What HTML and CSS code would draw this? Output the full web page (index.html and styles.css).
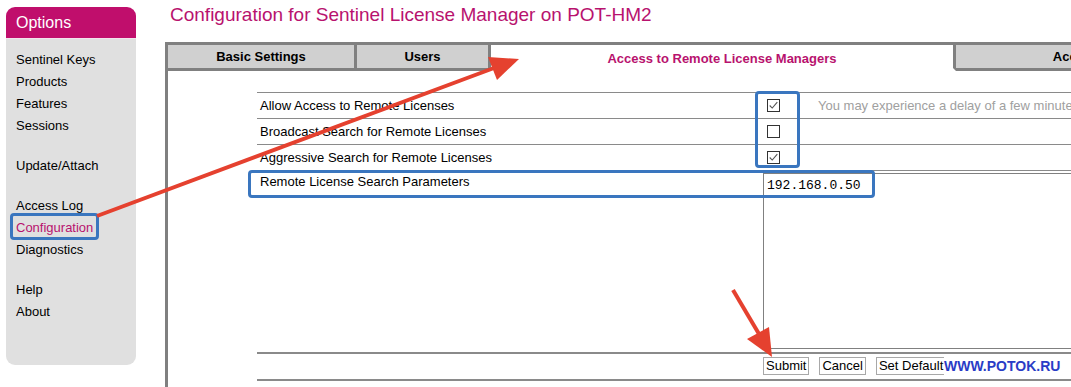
FILE: index.html
```html
<!DOCTYPE html>
<html lang="en">
<head>
  <meta charset="UTF-8"/>
  <title>Sentinel License Manager - Configuration</title>
  <link rel="stylesheet" href="styles.css">
</head>
<body>
  <div class="page">
    <div class="sidebar">
      <div class="sidebar-head">Options</div>
      <div class="sidebar-body">
        <ul class="menu">
          <li><a href="#">Sentinel Keys</a></li>
          <li><a href="#">Products</a></li>
          <li><a href="#">Features</a></li>
          <li><a href="#">Sessions</a></li>
        </ul>
        <ul class="menu">
          <li><a href="#">Update/Attach</a></li>
        </ul>
        <ul class="menu">
          <li><a href="#">Access Log</a></li>
          <li><a href="#" class="current">Configuration</a></li>
          <li><a href="#">Diagnostics</a></li>
        </ul>
        <ul class="menu">
          <li><a href="#">Help</a></li>
          <li><a href="#">About</a></li>
        </ul>
      </div>
    </div>

    <div class="main">
      <h1>Configuration for Sentinel License Manager on POT-HM2</h1>

      <div class="tabs">
        <div class="tab tab-basic">Basic Settings</div>
        <div class="tab tab-users">Users</div>
        <div class="tab tab-remote active">Access to Remote License Managers</div>
        <div class="tab tab-clients">Access from Remote Clients</div>
      </div>

      <div class="panel">
        <div class="settings">
          <div class="row">
            <div class="label">Allow Access to Remote Licenses</div>
            <div class="cell"><span class="check on"><svg viewBox="0 0 13 13" width="11" height="11"><path d="M2 6.5 L5 9.5 L11 2.5" fill="none" stroke="#555" stroke-width="1.3"/></svg></span></div>
            <div class="hint">You may experience a delay of a few minutes when this option is changed.</div>
          </div>
          <div class="row">
            <div class="label">Broadcast Search for Remote Licenses</div>
            <div class="cell"><span class="check"></span></div>
            <div class="hint"></div>
          </div>
          <div class="row">
            <div class="label">Aggressive Search for Remote Licenses</div>
            <div class="cell"><span class="check on"><svg viewBox="0 0 13 13" width="11" height="11"><path d="M2 6.5 L5 9.5 L11 2.5" fill="none" stroke="#555" stroke-width="1.3"/></svg></span></div>
            <div class="hint"></div>
          </div>
          <div class="row row-params">
            <div class="label">Remote License Search Parameters</div>
            <div class="params">192.168.0.50</div>
          </div>
          <div class="row row-buttons">
            <div class="label"></div>
            <div class="buttons">
              <button>Submit</button>
              <button>Cancel</button>
              <button>Set Default</button>
            </div>
          </div>
        </div>
      </div>
    </div>
  </div>

  <!-- annotations drawn over the screenshot -->
  <div class="mark mark-menu"></div>
  <div class="mark mark-checks"></div>
  <div class="mark mark-params"></div>
  <div class="watermark">WWW.POTOK.RU</div>
  <svg class="arrows" width="1071" height="387" viewBox="0 0 1071 387">
    <line x1="97" y1="216" x2="494" y2="68" stroke="#e5412f" stroke-width="4"/>
    <polygon points="519,59 497,80 488,57" fill="#e5412f"/>
    <line x1="733" y1="290" x2="759" y2="334" stroke="#e5412f" stroke-width="4"/>
    <polygon points="772,357 769,327 747,339" fill="#e5412f"/>
  </svg>
</body>
</html>
```

FILE: styles.css
```css
html, body {
  margin: 0;
  overflow: hidden;
}

body {
  font-family: 'Liberation Sans', Arial, sans-serif;
  font-size: 13px;
  color: #000;
  background: #fff;
  position: relative;
  width: 1071px;
  height: 387px;
}

.page {
  display: flex;
  align-items: flex-start;
}

/* left menu */
.sidebar {
  flex: none;
  width: 130px;
  margin: 7px 0 0 6px;
}

.sidebar-head {
  background: #c00e6c;
  color: white;
  font-size: 16px;
  height: 32px;
  line-height: 31px;
  padding-left: 10px;
  border-radius: 9px 9px 0 0;
  border-bottom: 1px solid #f3e3ec;
  box-sizing: border-box;
}

.sidebar-body {
  background: #e0e0e0;
  height: 326px;
  padding: 10px 10px 0;
  box-sizing: border-box;
  border-radius: 0 0 9px 9px;
}

.menu {
  list-style: none;
  margin: 0 0 18px;
  padding: 0;
}

.menu li {
  line-height: 22px;
}

.menu a {
  color: #000;
  text-decoration: none;
}

.menu a.current {
  color: #b8126e;
}

/* main column */
.main {
  flex: none;
  width: 1000px;
  margin-left: 29px;
}

h1 {
  font-size: 19px;
  font-weight: normal;
  color: #b8126e;
  margin: 4px 0 16px 5px;
  line-height: 22px;
}

.tabs {
  display: flex;
  border-top: 3px solid #808080;
  border-left: 3px solid #808080;
}

.tab {
  flex: none;
  background: #d0d0d0;
  height: 23px;
  line-height: 23px;
  border-right: 3px solid #808080;
  border-bottom: 3px solid #808080;
  text-align: center;
  font-weight: bold;
  white-space: nowrap;
  overflow: hidden;
}

.tab-basic { width: 186px; }
.tab-users { width: 131px; }
.tab-remote { width: 462px; }
.tab-clients { width: 370px; }

.tab.active {
  background: white;
  color: #b8126e;
  border-bottom-color: white;
  line-height: 27px;
}

.panel {
  border-left: 3px solid #808080;
  height: 330px;
}

.settings {
  margin-left: 89px;
  padding-top: 21px;
  width: 900px;
}

.row {
  display: grid;
  grid-template-columns: 506px 55px 1fr;
  border-top: 1px solid #8a8a8a;
  height: 26px;
  box-sizing: border-box;
}

.label {
  padding-left: 3px;
  line-height: 25px;
  white-space: nowrap;
}

.cell {
  padding: 6px 0 0 4px;
}

.check {
  display: flex;
  align-items: center;
  justify-content: center;
  width: 11px;
  height: 11px;
  border: 1px solid #333;
  background: white;
}

.hint {
  color: #a0a0a0;
  line-height: 25px;
  white-space: nowrap;
}

.row-params {
  height: 182px;
}

.row-params .label {
  line-height: 22px;
}

.params {
  grid-column: 2 / 4;
  margin-top: 2px;
  height: 176px;
  box-sizing: border-box;
  border: 1px solid #808080;
  border-right: none;
  font-family: 'Liberation Mono', 'Courier New', monospace;
  font-size: 13px;
  line-height: 16px;
  padding: 4px 3px;
}

.row-buttons {
  border-top: 2px solid #8a8a8a;
  border-bottom: 2px solid #8a8a8a;
  height: 29px;
}

.buttons {
  grid-column: 2 / 4;
  display: flex;
  gap: 10px;
  padding-top: 3px;
  align-items: flex-start;
}

button {
  font-family: 'Liberation Sans', Arial, sans-serif;
  font-size: 13px;
  height: 18px;
  line-height: 16px;
  padding: 0 2px;
  background: white;
  border: 1px solid #a8a8a8;
  color: #000;
}

/* annotations */
.mark {
  position: absolute;
  border: 3px solid #3a76bf;
  border-radius: 4px;
  box-sizing: border-box;
}

.mark-menu {
  left: 10px;
  top: 213px;
  width: 89px;
  height: 27px;
}

.mark-checks {
  left: 755px;
  top: 91px;
  width: 45px;
  height: 77px;
}

.mark-params {
  left: 248px;
  top: 170px;
  width: 627px;
  height: 28px;
}

.watermark {
  position: absolute;
  left: 944px;
  top: 357px;
  background: white;
  color: #2a3cc6;
  font-weight: bold;
  font-size: 14px;
  line-height: 18px;
  padding-right: 4px;
}

.arrows {
  position: absolute;
  left: 0;
  top: 0;
  pointer-events: none;
}
```
